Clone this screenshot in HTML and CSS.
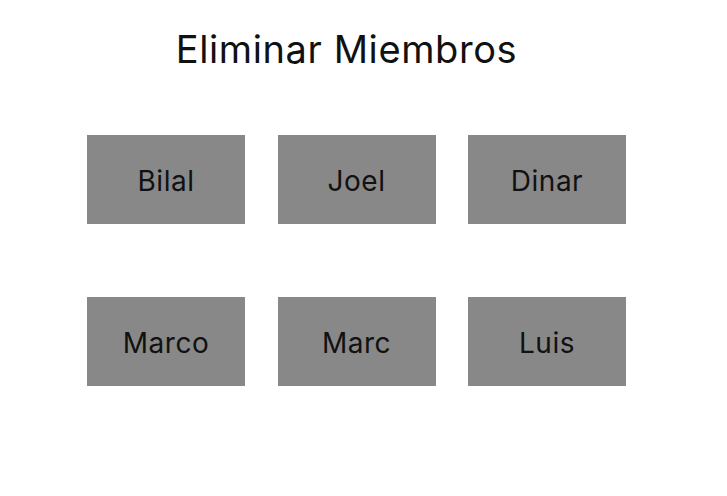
FILE: index.html
```html
<!DOCTYPE html>
<html lang="es">
<head>
    <meta charset="UTF-8" />
    <meta name="viewport" content="width=device-width, initial-scale=1.0" />
    <title>Eliminar Miembros</title>
    <link rel="stylesheet" href="styles.css">
</head>
<body>
    <!-- ========= Título ========= -->
    <h1 class="titulo">Eliminar Miembros</h1>

    <!-- ========= Miembros ========= -->
    <div class="miembros">
        <button class="miembro">Bilal</button>
        <button class="miembro">Joel</button>
        <button class="miembro">Dinar</button>
        <button class="miembro">Marco</button>
        <button class="miembro">Marc</button>
        <button class="miembro">Luis</button>
    </div>
</body>
</html>
```

FILE: styles.css
```css
:root {
    --gris: #888888;
    --texto: #111;
}

body {
    margin: 0;
    background: #fff;
    font-family: Inter, "Noto Sans", sans-serif;
    color: var(--texto);
}

.titulo {
    width: 693px;
    margin: 0;
    padding-top: 24px;
    font-size: 38px;
    font-weight: 400;
    letter-spacing: 0.6px;
    line-height: 50px;
    text-align: center;
}

/* ====== Rejilla de miembros ====== */
.miembros {
    display: grid;
    grid-template-columns: repeat(3, 158px);
    grid-auto-rows: 89px;
    column-gap: 32.5px;
    row-gap: 73px;
    padding: 61px 0 0 87px;
}

.miembro {
    border: 0;
    padding: 2px 0 0;
    background: var(--gris);
    color: var(--texto);
    font-family: inherit;
    font-size: 28px;
    letter-spacing: 0.5px;
    cursor: pointer;
}
```
